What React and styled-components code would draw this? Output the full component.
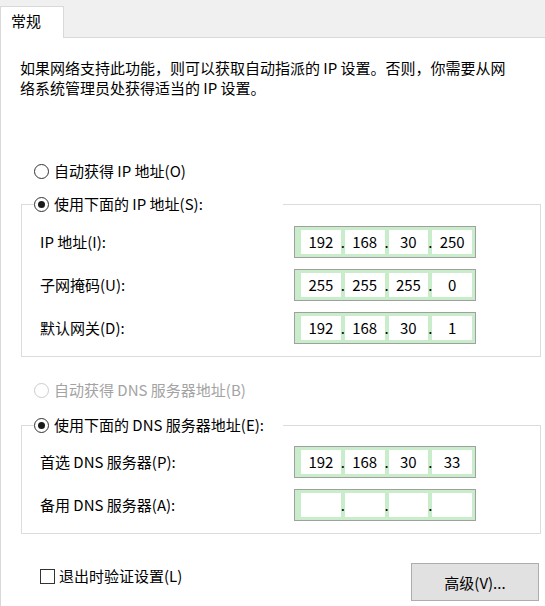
import React from 'react';
import styled, { createGlobalStyle } from 'styled-components';

const GlobalStyle = createGlobalStyle`
    html, body {
        margin: 0;
        padding: 0;
        background: #ffffff;
    }

    body {
        font-family: "Noto Sans CJK SC", "Noto Sans", sans-serif;
        font-size: 15px;
        color: #000000;
    }
`;

const Window = styled.div`
    width: 545px;
    height: 606px;
    display: flex;
    flex-direction: column;
    overflow: hidden;
    background: #f0f0f0;
`;

const TabStrip = styled.div`
    height: 38px;
    box-sizing: border-box;
    display: flex;
    align-items: flex-end;
    border-bottom: 1px solid #d9d9d9;
`;

const Tab = styled.div`
    width: 64px;
    height: 32px;
    box-sizing: border-box;
    margin-bottom: -1px;
    padding: 4px 0 0 10px;
    background: #ffffff;
    border: 1px solid #d9d9d9;
    border-bottom: none;
    line-height: 20px;
`;

const Panel = styled.div`
    flex: 1;
    display: flex;
    flex-direction: column;
    align-items: flex-start;
    background: #ffffff;
    border-left: 1px solid #d9d9d9;
    padding: 20px 0 0 19px;
`;

const Description = styled.p`
    margin: 0;
    line-height: 20px;
`;

const RadioRow = styled.label`
    display: flex;
    align-items: center;
    gap: 5px;
    height: 20px;
    line-height: 20px;
    margin-top: ${p => p.$top || 0}px;
    padding-left: ${p => p.$indent ?? 14}px;
    padding-right: 2px;
    color: ${p => (p.$disabled ? '#a3a3a3' : '#000000')};
    background: #ffffff;
`;

const RadioCircle = styled.span`
    width: 15px;
    height: 15px;
    box-sizing: border-box;
    border-radius: 50%;
    border: 1px solid ${p => (p.$disabled ? '#cccccc' : '#333333')};
    background: #ffffff;
    display: flex;
    align-items: center;
    justify-content: center;

    &::after {
        content: '';
        display: ${p => (p.$checked ? 'block' : 'none')};
        width: 7px;
        height: 7px;
        border-radius: 50%;
        background: #1a1a1a;
    }
`;

const Group = styled.fieldset`
    margin: ${p => p.$top}px 0 0 1px;
    padding: 0;
    width: 520px;
    box-sizing: border-box;
    border: 1px solid #dcdcdc;
    min-width: 0;

    legend {
        margin-left: 12px;
        padding: 0;
        width: 249px;
    }
`;

const Rows = styled.div`
    display: flex;
    flex-direction: column;
    gap: 11px;
    padding: ${p => p.$top}px 64px 12px 18px;
`;

const FieldRow = styled.div`
    display: flex;
    align-items: center;
    justify-content: space-between;
    height: 32px;
    line-height: 20px;
`;

const IpBox = styled.div`
    width: 182px;
    height: 32px;
    box-sizing: border-box;
    border: 1px solid #a0a0a0;
    background: #c9ecca;
    padding: 3px 3px 3px 6px;
    display: flex;
`;

const Octet = styled.div`
    flex: 1;
    background: #ffffff;
    display: flex;
    align-items: center;
    justify-content: center;
    line-height: 20px;
`;

const Dot = styled.span`
    width: 4px;
    display: flex;
    justify-content: center;
    align-items: center;
    line-height: 20px;
    overflow: visible;
`;

const Footer = styled.div`
    width: 520px;
    margin-top: 29px;
    display: flex;
    justify-content: space-between;
    align-items: flex-start;
`;

const CheckRow = styled.label`
    display: flex;
    align-items: center;
    gap: 4px;
    height: 20px;
    line-height: 20px;
    margin: 3px 0 0 20px;
`;

const CheckBox = styled.span`
    width: 15px;
    height: 15px;
    box-sizing: border-box;
    border: 1px solid #333333;
    background: #ffffff;
`;

const Button = styled.button`
    width: 128px;
    height: 38px;
    margin-right: 1px;
    border: 1px solid #adadad;
    background: #e1e1e1;
    font-family: inherit;
    font-size: 15px;
    color: #000000;
    padding: 0;
`;

const IpField = ({ parts }) => (
    <IpBox>
        {parts.map((part, i) => (
            <React.Fragment key={i}>
                {i > 0 && <Dot>.</Dot>}
                <Octet>{part}</Octet>
            </React.Fragment>
        ))}
    </IpBox>
);

const Radio = ({ checked, disabled, children, ...rest }) => (
    <RadioRow $disabled={disabled} {...rest}>
        <RadioCircle $checked={checked} $disabled={disabled} />
        {children}
    </RadioRow>
);

const ipRows = [
    { label: 'IP 地址(I):', parts: ['192', '168', '30', '250'] },
    { label: '子网掩码(U):', parts: ['255', '255', '255', '0'] },
    { label: '默认网关(D):', parts: ['192', '168', '30', '1'] },
];

const dnsRows = [
    { label: '首选 DNS 服务器(P):', parts: ['192', '168', '30', '33'] },
    { label: '备用 DNS 服务器(A):', parts: ['', '', '', ''] },
];

export default function App() {
    return (
        <Window>
            <GlobalStyle />
            <TabStrip>
                <Tab>常规</Tab>
            </TabStrip>
            <Panel>
                <Description>
                    如果网络支持此功能，则可以获取自动指派的 IP 设置。否则，你需要从网
                    <br />
                    络系统管理员处获得适当的 IP 设置。
                </Description>

                <Radio $top={63}>自动获得 IP 地址(O)</Radio>
                <Group $top={13}>
                    <legend>
                        <Radio checked $indent={0}>使用下面的 IP 地址(S):</Radio>
                    </legend>
                    <Rows $top={12}>
                        {ipRows.map(row => (
                            <FieldRow key={row.label}>
                                {row.label}
                                <IpField parts={row.parts} />
                            </FieldRow>
                        ))}
                    </Rows>
                </Group>

                <Radio disabled $top={23}>自动获得 DNS 服务器地址(B)</Radio>
                <Group $top={15}>
                    <legend>
                        <Radio checked $indent={0}>使用下面的 DNS 服务器地址(E):</Radio>
                    </legend>
                    <Rows $top={11}>
                        {dnsRows.map(row => (
                            <FieldRow key={row.label}>
                                {row.label}
                                <IpField parts={row.parts} />
                            </FieldRow>
                        ))}
                    </Rows>
                </Group>

                <Footer>
                    <CheckRow>
                        <CheckBox />
                        退出时验证设置(L)
                    </CheckRow>
                    <Button>高级(V)...</Button>
                </Footer>
            </Panel>
        </Window>
    );
}
